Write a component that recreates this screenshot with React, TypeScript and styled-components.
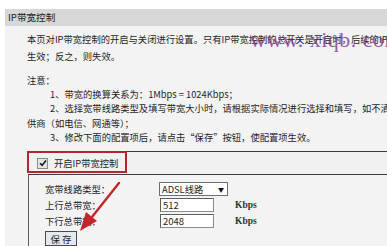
import { createGlobalStyle, styled } from "styled-components"

const GlobalStyle = createGlobalStyle`
  html, body {
    margin: 0;
    padding: 0;
    background: #ffffff;
    overflow: hidden;
  }
  body {
    font-family: "Noto Sans CJK SC", "Noto Sans", sans-serif;
    color: #1e1e1e;
  }
`

const App = () => {
  return (
    <>
      <GlobalStyle />
      <Page>
        <TitleBar>IP带宽控制</TitleBar>
        <Panel>
          <Intro>
            <Line>本页对IP带宽控制的开启与关闭进行设置。只有IP带宽控制的总开关是开启时，后续的IP带宽控制规则才能</Line>
            <Line>生效；反之，则失效。</Line>
          </Intro>
          <Notes>
            <NoteTitle>注意：</NoteTitle>
            <NoteLine $indent>1、带宽的换算关系为：1Mbps = 1024Kbps；</NoteLine>
            <NoteLine $indent>2、选择宽带线路类型及填写带宽大小时，请根据实际情况进行选择和填写，如不清楚，请咨询您的带宽提</NoteLine>
            <NoteLine>供商（如电信、网通等）；</NoteLine>
            <NoteLine $indent>3、修改下面的配置项后，请点击“保存”按钮，使配置项生效。</NoteLine>
          </Notes>
          <Section>
            <SectionHeader>
              <CheckBox>
                <svg width="8" height="8" viewBox="0 0 8 8">
                  <path d="M1 4.2 L3.1 6.4 L7 1.4" fill="none" stroke="#1a1a1a" strokeWidth="1.6" />
                </svg>
              </CheckBox>
              <span>开启IP带宽控制</span>
              <Highlight />
            </SectionHeader>
            <SectionBody>
              <FormGrid>
                <FieldLabel>宽带线路类型：</FieldLabel>
                <SelectBox>
                  <span>ADSL线路</span>
                  <Caret>▼</Caret>
                </SelectBox>
                <span />
                <FieldLabel>上行总带宽：</FieldLabel>
                <TextBox>512</TextBox>
                <Unit>Kbps</Unit>
                <FieldLabel>下行总带宽：</FieldLabel>
                <TextBox>2048</TextBox>
                <Unit>Kbps</Unit>
              </FormGrid>
              <SaveButton>保 存</SaveButton>
            </SectionBody>
          </Section>
        </Panel>
        <Watermark>www. xiqb. com</Watermark>
        <Arrow width="60" height="60" viewBox="0 0 60 60">
          <line x1="49" y1="2" x2="22" y2="36" stroke="#c3262b" strokeWidth="2.4" strokeLinecap="round" />
          <polygon points="10,50 16,31 27,40" fill="#c3262b" />
        </Arrow>
      </Page>
    </>
  )
}

const Page = styled.div`
  position: relative;
  width: 387px;
  height: 246px;
  padding: 9px 0 0 5px;
  box-sizing: border-box;
  font-size: 9.3px;
`

const TitleBar = styled.div`
  height: 17px;
  line-height: 17px;
  background: #d7d7d7;
  padding-left: 3px;
  font-size: 9.6px;
  color: #1a1a1a;
`

const Panel = styled.div`
  background: #f3f3f3;
  height: 220px;
  padding-left: 22px;
  white-space: nowrap;
  overflow: hidden;
`

const Intro = styled.div`
  padding-top: 5px;
`

const Line = styled.div`
  line-height: 17px;
`

const Notes = styled.div`
  margin-top: 9px;
`

const NoteTitle = styled.div`
  line-height: 13px;
`

const NoteLine = styled.div<{ $indent?: boolean }>`
  line-height: 14.3px;
  padding-left: ${(p) => (p.$indent ? "23px" : "0")};
`

const Section = styled.div`
  margin-top: 7px;
  margin-left: 1px;
`

const SectionHeader = styled.div`
  position: relative;
  height: 22px;
  border-top: 1px solid #3c3c3c;
  border-bottom: 1px solid #3c3c3c;
  background: #f1f1f1;
  display: flex;
  align-items: center;
  gap: 6px;
  padding-left: 9px;
`

const CheckBox = styled.span`
  width: 9px;
  height: 9px;
  border: 1px solid #8a8a8a;
  background: #e4e4e4;
  display: flex;
  align-items: center;
  justify-content: center;
`

const Highlight = styled.div`
  position: absolute;
  left: -1px;
  top: -1px;
  width: 100px;
  height: 22px;
  border: 2px solid #b3262c;
  box-sizing: border-box;
`

const SectionBody = styled.div`
  border-left: 1px solid #5a5a5a;
  padding: 6px 0 0 16px;
  height: 80px;
`

const FormGrid = styled.div`
  display: grid;
  grid-template-columns: 107px auto 1fr;
  grid-auto-rows: 16px;
  align-items: center;
  column-gap: 7px;
`

const FieldLabel = styled.span`
  margin-right: -7px;
`

const SelectBox = styled.div`
  width: 69px;
  height: 14px;
  box-sizing: border-box;
  border: 1px solid #6f6f6f;
  background: #ffffff;
  display: flex;
  align-items: center;
  justify-content: space-between;
  padding: 0 3px 0 2px;
`

const Caret = styled.span`
  font-size: 6px;
  color: #111;
`

const TextBox = styled.div`
  width: 54px;
  height: 14px;
  box-sizing: border-box;
  margin-left: 1px;
  border: 1px solid #8c8c8c;
  border-top-color: #5e5e5e;
  border-left-color: #5e5e5e;
  background: #ffffff;
  padding-left: 2px;
  line-height: 12px;
  font-size: 9.5px;
`

const Unit = styled.span`
  font-family: "Liberation Serif", serif;
  font-weight: bold;
  font-size: 9.5px;
  color: #333;
`

const SaveButton = styled.div`
  margin-top: 2px;
  width: 32px;
  height: 15px;
  box-sizing: border-box;
  border: 1px solid #4a4a4a;
  background: #e3e9ef;
  display: flex;
  align-items: center;
  justify-content: center;
  font-size: 9.5px;
`

const Watermark = styled.div`
  position: absolute;
  left: 250px;
  top: 27px;
  font-family: "Liberation Serif", serif;
  font-size: 22px;
  letter-spacing: 0.5px;
  color: rgba(128, 48, 140, 0.78);
  white-space: nowrap;
`

const Arrow = styled.svg`
  position: absolute;
  left: 70px;
  top: 181px;
`

export default App
